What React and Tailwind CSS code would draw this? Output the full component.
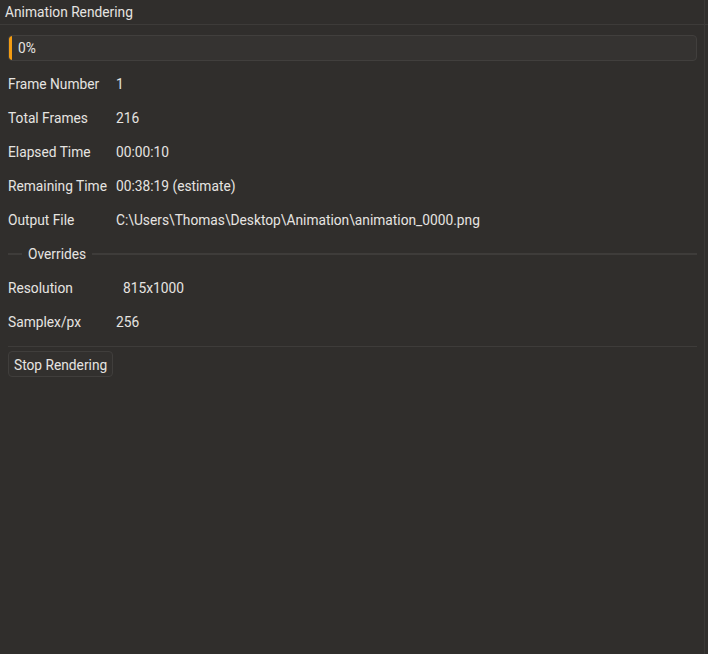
import React from "react";

function Row({ label, value, valueClass = "" }) {
  return (
    <div className="flex h-[34px] items-center">
      <div className="w-[108px] shrink-0">{label}</div>
      <div className={valueClass}>{value}</div>
    </div>
  );
}

export default function App() {
  return (
    <div
      className="relative flex h-[654px] w-[708px] flex-col bg-[#302e2c] text-[13.75px] text-[#e6e4e1]"
      style={{ fontFamily: "Roboto, 'Noto Sans', sans-serif" }}
    >
      <div className="flex h-[25px] shrink-0 items-center border-b border-[#3d3b39] pl-[5px] pt-[1px]">
        Animation Rendering
      </div>
      <div className="flex flex-col px-[8px] pr-[11px]">
        <div className="mt-[10px] flex h-[26px] items-center overflow-hidden rounded-[4px] border border-[#413f3d] bg-[#353331]">
          <div className="h-full w-[3px] rounded-l-[3px] bg-[#f39c12]" />
          <div className="pl-[6px] pt-[1px]">0%</div>
        </div>
        <div className="mt-[6px] flex flex-col">
          <Row label="Frame Number" value="1" />
          <Row label="Total Frames" value="216" />
          <Row label="Elapsed Time" value="00:00:10" />
          <Row label="Remaining Time" value="00:38:19 (estimate)" />
          <Row label="Output File" value="C:\Users\Thomas\Desktop\Animation\animation_0000.png" />
        </div>
        <div className="flex h-[34px] items-center gap-[6px]">
          <div className="h-[2px] w-[14px] bg-[#3e3c3a]" />
          <div>Overrides</div>
          <div className="h-[2px] flex-1 bg-[#3e3c3a]" />
        </div>
        <Row label="Resolution" value="815x1000" valueClass="pl-[7px]" />
        <Row label="Samplex/px" value="256" />
        <div className="mt-[7px] h-px bg-[#3e3c3a]" />
        <div className="mt-[4px] flex">
          <div className="flex h-[26px] items-center rounded-[4px] border border-[#403e3c] bg-[#32302e] px-[5px] pt-[2px]">
            Stop Rendering
          </div>
        </div>
      </div>
      <div className="absolute right-[3px] top-0 h-full w-px bg-[#3a3836]" />
    </div>
  );
}
